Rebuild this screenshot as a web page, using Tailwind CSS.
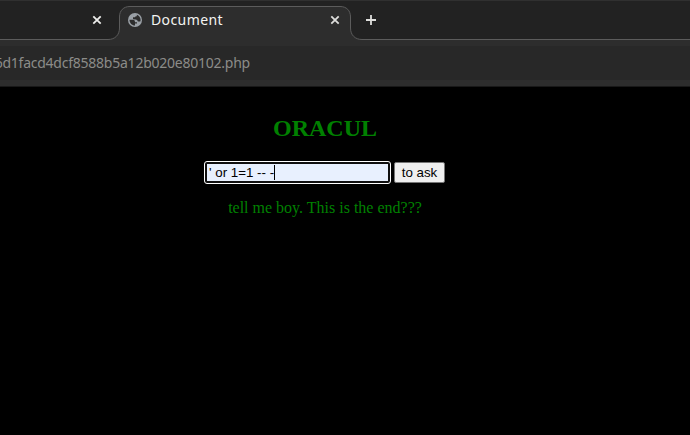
<!DOCTYPE html>
<html lang="en">
<head>
<meta charset="utf-8">
<title>Document</title>
<script src="https://cdn.jsdelivr.net/npm/@tailwindcss/browser@4"></script>
</head>
<body class="w-[690px] h-[435px] overflow-hidden bg-black flex flex-col">
  <header class="relative h-10 shrink-0 bg-[#222222] border-t border-[#303030]">
    <svg class="absolute left-0 -top-px" width="690" height="40" viewBox="0 0 690 40" fill="none">
      <path d="M0 39.5H108C115 39.5 119.500 35 119.500 28V17C119.500 10.500 123.500 6.500 130 6.500H340C346.500 6.500 350.500 10.500 350.500 17V28C350.500 35 355 39.500 362 39.500H690V41H0Z" fill="#2d2d2d"/>
      <path d="M-1 39.500H108C115 39.500 119.500 35 119.500 28V17C119.500 10.500 123.500 6.500 130 6.500H340C346.500 6.500 350.500 10.500 350.500 17V28C350.500 35 355 39.500 362 39.500H691" stroke="#5c5c5c"/>
    </svg>
    <div class="relative h-[38px] flex items-center">
      <svg class="ml-[92px]" width="10" height="10" viewBox="0 0 10 10" stroke="#eeeeec" stroke-width="1.8"><path d="M1.300 1.300L8.700 8.700M8.700 1.300L1.300 8.700"/></svg>
      <svg class="ml-[26px]" width="14" height="14" viewBox="0 0 14 14"><circle cx="7" cy="7" r="7" fill="#9aa0a6"/><path d="M1.500 6.800H4.600C6.200 6.800 7 7.600 7 9.200H9V10.600H7V12.600C4 12.600 1.500 10.200 1.500 6.800Z" fill="#2d2d2d"/><path d="M8.800 1.700C11 2.500 12.600 4.600 12.600 7C12.600 7.700 12.500 8.100 12.300 8.600H9.900C9.600 7.300 9 6.600 7.600 6.400L5 6.200V4.200H7L7.700 3.200H8.800Z" fill="#2d2d2d"/></svg>
      <span class="ml-[9px] w-[179px] font-['Noto_Sans'] text-[14px] leading-5 tracking-[0.400px] text-[#f4f4f2]">Document</span>
      <svg width="10" height="10" viewBox="0 0 10 10" stroke="#dededc" stroke-width="1.800"><path d="M1.300 1.300L8.700 8.700M8.700 1.300L1.300 8.700"/></svg>
      <svg class="ml-[25px]" width="12" height="12" viewBox="0 0 12 12" stroke="#dededc" stroke-width="1.800"><path d="M6 1V11M1 6H11"/></svg>
    </div>
  </header>
  <div class="h-[47px] shrink-0 bg-[#2d2d2d] pt-1.5 border-b border-[#191919]">
    <div class="h-[34px] w-full bg-[#282828] flex items-center">
      <div class="w-[250px] flex justify-end whitespace-nowrap font-['Noto_Sans'] text-[14px] leading-5 tracking-[-0.240px] text-[#8c8c89]">6d1facd4dcf8588b5a12b020e80102.php</div>
    </div>
  </div>
  <main class="w-[649px] flex flex-col items-center font-['Liberation_Serif',serif] text-[#008000]">
    <h1 class="mt-[28px] pl-px text-2xl leading-[27px] font-bold">ORACUL</h1>
    <form class="mt-[19px] flex items-center gap-[3px]" onsubmit="return false">
      <div class="w-[187px] h-[23px] rounded-[3px] border border-white bg-[#101010] p-[2px]">
        <div class="h-full bg-[#e8f0fe] flex items-center pl-0.5 font-['Liberation_Sans',sans-serif] text-[13.333px] leading-[15px] text-black whitespace-pre">' or 1=1 -- -<span class="w-px h-[15px] bg-black"></span></div>
      </div>
      <button class="w-[51px] h-[21px] rounded-[2px] border border-[#767676] bg-[#efefef] font-['Liberation_Sans',sans-serif] text-[13.333px] leading-[15px] text-black">to ask</button>
    </form>
    <p class="mt-[15px] pl-px text-base leading-[18px]">tell me boy. This is the end???</p>
  </main>
</body>
</html>
